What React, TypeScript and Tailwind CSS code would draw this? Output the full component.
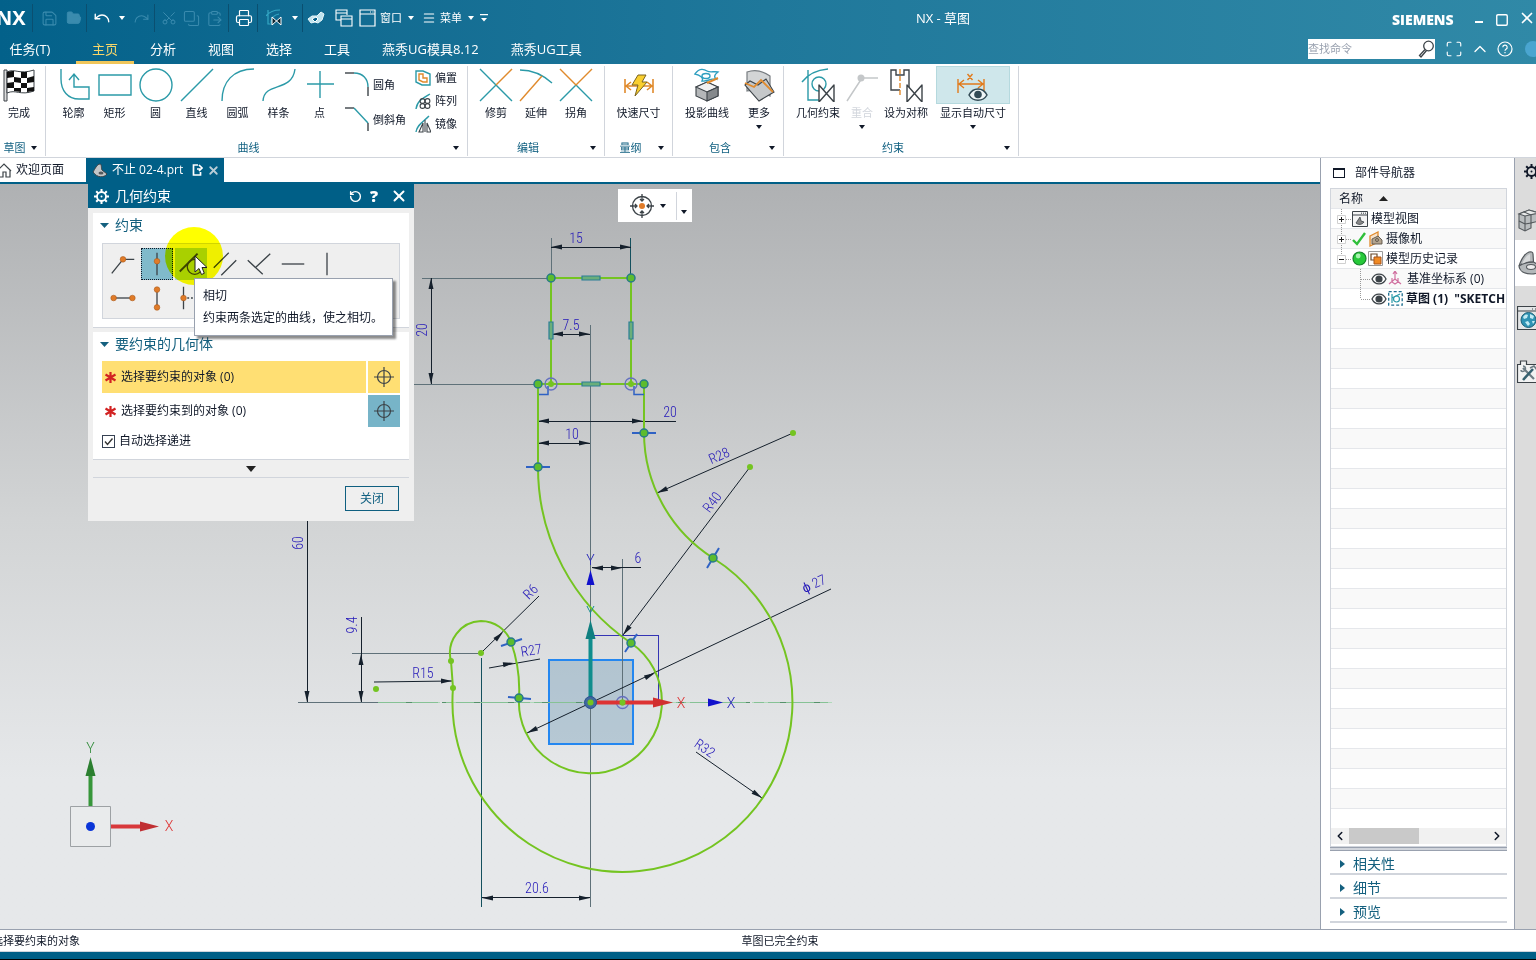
import type { ReactNode } from "react";
import {
    ChevronLeft, ChevronRight, ChevronUp, ClipboardPaste, Copy, FolderOpen, Maximize, Menu, Printer,
    Redo, RotateCcw, Save, Scissors, Square, Undo, X,
} from "lucide-react";

const TEAL = "#2b9aa8";
const ORANGE = "#e08a2c";
const INK = "#3c4348";

function Icon({ w = 34, h = 34, className = "", children }: { w?: number; h?: number; className?: string; children: ReactNode }) {
    return (
        <svg width={w} height={h} viewBox={`0 0 ${w} ${h}`} fill="none" stroke={TEAL} strokeWidth="1.4" className={`shrink-0 ${className}`} aria-hidden="true">
            {children}
        </svg>
    );
}

function Caret({ className = "" }: { className?: string }) {
    return (
        <svg width="6" height="4" viewBox="0 0 6 4" className={`shrink-0 ${className}`} aria-hidden="true">
            <path d="M0 0h6L3 4z" fill="currentColor" />
        </svg>
    );
}

function Gear() {
    return (
        <svg width="15" height="15" viewBox="0 0 15 15" fill="none" stroke="currentColor" className="shrink-0" aria-hidden="true">
            <circle cx="7.5" cy="7.5" r="4.5" strokeWidth="1.8" />
            <path d="M7.500 0v3M7.500 12v3M0 7.500h3M12 7.500h3M2.200 2.200l2 2M10.800 10.800l2 2M12.800 2.200l-2 2M4.200 10.800l-2 2" strokeWidth="2" />
            <circle cx="7.5" cy="7.5" r="1" fill="currentColor" stroke="none" />
        </svg>
    );
}

/* ---------- title bar ---------- */

const tabs = ["主页", "分析", "视图", "选择", "工具", "燕秀UG模具8.12", "燕秀UG工具"];

function Divider() {
    return <span className="h-7 w-px bg-[#0a4f70]" />;
}

function Header() {
    return (
        <header className="overflow-hidden bg-linear-to-r from-[#03618a] via-[#1f789b] to-[#3089a7] text-white">
            <div className="flex h-9 items-center">
                <div className="flex w-[494px] shrink-0 items-center">
                    <span className="-ml-1 w-9 shrink-0 text-[20px] leading-9 font-bold">NX</span>
                    <Divider />
                    <div className="flex w-[53px] items-center gap-2 pl-2 text-[#3a8bae]">
                        <button aria-label="保存"><Save size={17} strokeWidth={1.5} /></button>
                        <button aria-label="打开"><FolderOpen size={16} fill="currentColor" strokeWidth={1.5} /></button>
                    </div>
                    <Divider />
                    <div className="flex w-[67px] items-center gap-2 pl-1.5">
                        <button aria-label="撤销"><Undo size={18} strokeWidth={1.8} /></button>
                        <Caret />
                        <button aria-label="重做" className="text-[#3a8bae]"><Redo size={17} strokeWidth={1.5} /></button>
                    </div>
                    <Divider />
                    <div className="flex w-[73px] items-center gap-1.5 pl-1.5 text-[#3a8bae]">
                        <button aria-label="剪切"><Scissors size={16} strokeWidth={1.5} className="-rotate-90" /></button>
                        <button aria-label="复制"><Copy size={17} strokeWidth={1.5} className="-scale-100" /></button>
                        <button aria-label="粘贴"><ClipboardPaste size={17} strokeWidth={1.5} /></button>
                    </div>
                    <Divider />
                    <button aria-label="打印" className="w-7 pl-1.5"><Printer size={18} strokeWidth={1.6} /></button>
                    <Divider />
                    <button aria-label="几何约束" className="flex w-11 items-center gap-2 pl-2">
                        <Icon w={18} h={18}>
                            <path d="M2 1v14h6M0 7C3 3 8 1 14 1M5 14C5 8 8 6 13 5" stroke="#35a7c4" strokeWidth="1.2" />
                            <path d="M6 8v8l9-8v8z" fill="#0b2430" stroke="#fff" strokeWidth="1" />
                        </Icon>
                        <Caret />
                    </button>
                    <Divider />
                    <button aria-label="触控" className="ml-1">
                        <Icon w={18} h={18}>
                            <path d="M1 10l4-3h5l4-4 3 2-2 6-4 3-3-1-4 1z" fill="#bfe3ee" stroke="#e6f6fa" strokeWidth="1" />
                            <path d="M5 10l4-2 2 2-3 3z" fill="#03618a" stroke="#fff" strokeWidth="1" />
                        </Icon>
                    </button>
                    <button aria-label="切换窗口" className="ml-2.5">
                        <Icon w={18} h={18}>
                            <path d="M12 6V1H1v10h5M1 4h11M6 7h11v10H6zM6 10h11" stroke="#fff" strokeWidth="1.1" />
                        </Icon>
                    </button>
                    <button className="ml-1.5 flex items-center gap-1 text-[11px] leading-4">
                        <Icon w={17} h={18}>
                            <path d="M1 1h15v16H1zM1 5h15M11 3h1M13.500 3h1" stroke="#fff" strokeWidth="1.2" />
                        </Icon>
                        窗口
                        <Caret className="ml-0.5" />
                    </button>
                    <button className="ml-2 flex items-center gap-1 text-[11px] leading-4">
                        <Menu size={14} strokeWidth={1.8} />
                        菜单
                        <Caret className="ml-0.5" />
                    </button>
                    <button aria-label="工具条选项" className="ml-1.5">
                        <svg width="8" height="8" viewBox="0 0 8 8" aria-hidden="true"><path d="M0 0h8v1.300H0zM1 4h6L4 7.500z" fill="#fff" /></svg>
                    </button>
                </div>
                <h1 className="flex-1 text-center text-[13px] leading-5">NX - 草图</h1>
                <div className="flex w-36 shrink-0 items-center">
                    <span className="w-[88px] pt-1 text-[14px] leading-4 font-extrabold">SIEMENS</span>
                    <button aria-label="最小化" className="w-[22px] pt-2"><span className="block h-0.5 w-2 bg-white" /></button>
                    <button aria-label="最大化" className="w-6 pt-1">
                        <Square size={14} strokeWidth={2.4} />
                    </button>
                    <button aria-label="关闭窗口" className="shrink-0"><X size={18} strokeWidth={2.2} /></button>
                </div>
            </div>
            <div className="flex h-7 items-stretch text-[13px] leading-6">
                <button className="mr-4 w-15 shrink-0 border-b-3 border-transparent text-center">任务(T)</button>
                <nav className="flex flex-1">
                    {tabs.map((tab, i) => (
                        <button key={tab} className={i === 0 ? "border-b-3 border-[#f0c65a] px-4 text-[#f7d66b]" : "border-b-3 border-transparent px-4"}>
                            {tab}
                        </button>
                    ))}
                </nav>
                <div className="flex w-57 shrink-0 items-center">
                    <label className="mb-0.5 flex h-5 w-[127px] shrink-0 items-center bg-white text-gray-700">
                        <input aria-label="查找命令" placeholder="查找命令" className="min-w-0 flex-1 text-[11px] leading-4 text-gray-700 placeholder:text-gray-400" />
                        <Icon w={18} h={18}>
                            <circle cx="11.500" cy="6" r="4.800" stroke={INK} strokeWidth="1.300" />
                            <path d="M8 9.500l-5.500 6 1.500 1.500 5.500-6.500" stroke={INK} strokeWidth="1.300" />
                        </Icon>
                    </label>
                    <div className="mb-0.5 flex shrink-0 items-center gap-2 pl-2.5">
                        <button aria-label="全屏"><Maximize size={18} strokeWidth={1.5} /></button>
                        <button aria-label="折叠"><ChevronUp size={20} strokeWidth={1.6} className="-mx-px" /></button>
                        <button aria-label="帮助">
                            <svg width="16" height="16" viewBox="0 0 16 16" fill="none" stroke="#fff" strokeWidth="1.2" aria-hidden="true">
                                <circle cx="8" cy="8" r="7" />
                                <path d="M5.800 6.200a2.200 2.200 0 1 1 3.200 2c-.8.5-1 .8-1 1.600M8 11v1.300" />
                            </svg>
                        </button>
                        <span className="ml-1 size-4 rounded-full bg-[#4aa5d0]" />
                    </div>
                </div>
            </div>
        </header>
    );
}

/* ---------- ribbon ---------- */

const bowtie = <path d="M18 17v17L33 17v17z" fill="#fff" stroke={INK} strokeWidth="1.400" strokeLinejoin="round" />;

const curveTools: { label: string; icon: ReactNode }[] = [
    { label: "轮廓", icon: <path d="M4 1v10c0 12 7 20 18 20h10V19H17V7M12 12l5-6 5 6" /> },
    { label: "矩形", icon: <path d="M1 7h32v20H1z" /> },
    { label: "圆", icon: <circle cx="17" cy="17" r="16" /> },
    { label: "直线", icon: <path d="M1 33L33 1" /> },
    { label: "圆弧", icon: <path d="M1 33C1 14 12 1 33 1" /> },
    { label: "样条", icon: <path d="M1 33C2 13 30 25 33 1" /> },
    { label: "点", icon: <path d="M17 3v27M4 16h27" /> },
];

const editTools: { label: string; icon: ReactNode }[] = [
    { label: "修剪", icon: <><path d="M1 1l32 32M1 33l16-16" /><path d="M17 17L33 1" stroke={ORANGE} /></> },
    { label: "延伸", icon: <><path d="M1 2c12 0 22 4 32 13" /><path d="M23 8L1 33" stroke={ORANGE} /></> },
    { label: "拐角", icon: <><path d="M1 33l16-16 16 16" /><path d="M1 1l16 16L33 1" stroke={ORANGE} /></> },
];

function Tool({ label, icon, width = "w-10", menu, disabled, active }: { label: string; icon: ReactNode; width?: string; menu?: boolean; disabled?: boolean; active?: boolean }) {
    return (
        <button disabled={disabled} className={`flex shrink-0 flex-col items-center text-[11px] leading-4 whitespace-nowrap ${width} ${disabled ? "text-gray-300" : "text-gray-900"}`}>
            <span className={`mb-px flex h-[38px] w-full items-center justify-center ${active ? "border border-[#b5d9de] bg-[#cfe7eb]" : ""}`}>
                <Icon>{icon}</Icon>
            </span>
            {label}
            {menu && <Caret className="mt-1 text-gray-900" />}
        </button>
    );
}

function Group({ title, className = "", children }: { title: string; className?: string; children: ReactNode }) {
    return (
        <section className="mt-0.5 mb-px flex shrink-0 flex-col border-r border-gray-300">
            <div className={`flex flex-1 ${className}`}>{children}</div>
            <div className="flex h-4 items-center text-[11px] leading-4 text-[#0f5f80]">
                <span className="flex-1 text-center">{title}</span>
                <button aria-label={`${title}选项`} className="w-4 pl-0.5 text-gray-900"><Caret /></button>
            </div>
        </section>
    );
}

function SmallTool({ label, icon }: { label: string; icon: ReactNode }) {
    return (
        <button className="flex h-[23px] items-center gap-1 text-[11px] leading-4 whitespace-nowrap text-gray-900">
            <Icon w={16} h={18}>{icon}</Icon>
            {label}
        </button>
    );
}

function Ribbon() {
    return (
        <div className="flex h-[94px] shrink-0 overflow-hidden border-b border-gray-300 bg-white">
            <Group title="草图" className="w-[45px]">
                <Tool
                    label="完成"
                    width="w-[38px]"
                    icon={
                        <>
                            <path d="M2 2h3v31H2z" fill="#ddd" stroke={INK} strokeWidth="1" />
                            <path d="M5 4c8-4 12 3 27-2v21c-14 5-18-2-27 2z" fill="#fff" stroke={INK} strokeWidth="1" />
                            <path d="M5 4c3-1 5-1 7-1v6l-7 1zM19 4l6 0v6l-6 0zM12 9l7 1v5l-7-1zM25 10l7-2v6l-7 1zM5 15l7-1v6l-7 0zM19 15l6 0v5l-6 0zM12 20l7 0v4l-7-1zM25 20l7-1v4l-7 1z" fill="#111" stroke="none" />
                        </>
                    }
                />
            </Group>
            <Group title="曲线" className="pr-2.5 pl-[7px]">
                {curveTools.map((tool) => <Tool key={tool.label} width="w-[41px]" {...tool} />)}
                <div className="flex w-[71px] flex-col gap-2.5 pt-1.5 pl-1 text-[11px] leading-4 whitespace-nowrap">
                    <button className="flex items-center gap-1">
                        <Icon w={25} h={25}><path d="M1 1h9" stroke={INK} /><path d="M10 1c9 0 14 6 14 14" /><path d="M24 15v9" stroke={INK} /></Icon>
                        圆角
                    </button>
                    <button className="flex items-center gap-1">
                        <Icon w={25} h={25}><path d="M1 1h9" stroke={INK} /><path d="M10 1l14 15" /><path d="M24 16v8" stroke={INK} /></Icon>
                        倒斜角
                    </button>
                </div>
                <div className="flex flex-col pl-1">
                    <SmallTool label="偏置" icon={<><path d="M1 2h7l7 3v11H7L1 13z" /><path d="M4 5h4v4h4v4H8L4 11z" stroke={ORANGE} /></>} />
                    <SmallTool
                        label="阵列"
                        icon={
                            <>
                                <path d="M1 17C2 9 8 6 15 2" />
                                <g stroke={INK} strokeWidth="1.100">
                                    <circle cx="7.500" cy="9" r="2.400" /><circle cx="12.500" cy="9" r="2.400" /><circle cx="7.500" cy="14" r="2.400" /><circle cx="12.500" cy="14" r="2.400" />
                                </g>
                            </>
                        }
                    />
                    <SmallTool label="镜像" icon={<><path d="M1 17C2 10 8 7 14 1" /><path d="M10 5v12M8 8v9H4zM12 8v9h4z" stroke={INK} strokeWidth="1.100" /></>} />
                </div>
            </Group>
            <Group title="编辑" className="px-2">
                {editTools.map((tool) => <Tool key={tool.label} {...tool} />)}
            </Group>
            <Group title="量纲" className="w-[67px] justify-center">
                <Tool
                    label="快速尺寸"
                    width="w-12"
                    icon={
                        <>
                            <path d="M3 11v14M31 11v14M4 18h26M9 14l-5 4 5 4M25 14l5 4-5 4" stroke={ORANGE} strokeWidth="1.600" />
                            <path d="M16 7h8l-4 7h5L13 28l3-11H10z" fill="#f9cf2f" stroke="#7b6420" strokeWidth="1" />
                        </>
                    }
                />
            </Group>
            <Group title="包含" className="w-[110px] gap-3 pl-2.5">
                <Tool
                    label="投影曲线"
                    width="w-12"
                    icon={
                        <>
                            <path d="M6 19l11-5 11 5v9l-11 5-11-5z" fill="#b4b7b9" stroke={INK} strokeWidth="1.100" />
                            <path d="M6 19l11-5 11 5-11 5z" fill="#f1f1f1" stroke={INK} strokeWidth="1.100" />
                            <path d="M17 24l11-5v9l-11 5z" fill="#85898c" stroke={INK} strokeWidth="1.100" />
                            <path d="M5 6c4-6 9-5 12-3s7 0 11 1c-4 3-4 5-2 7-5-1-9 3-14 2 2-3-2-6-7-7z" stroke="#2e9fc0" />
                            <ellipse cx="16" cy="8" rx="4" ry="2.500" stroke="#2e9fc0" />
                            <path d="M17 15l11-5" stroke={ORANGE} strokeWidth="2" />
                        </>
                    }
                />
                <Tool
                    label="更多"
                    width="w-8"
                    menu
                    icon={
                        <>
                            <path d="M5 4c8-3 16-1 23 4v20c-7-4-15-7-23-5z" fill="#d3d5d6" stroke="#777c80" strokeWidth="1.200" />
                            <path d="M3 17l5-4 8 4 8-6 8 13-15 9z" fill="#c5c8ca" stroke={INK} strokeWidth="1.100" />
                            <path d="M3 15l9 4 7-7 12 12" stroke={ORANGE} strokeWidth="1.800" />
                        </>
                    }
                />
            </Group>
            <Group title="约束" className="pr-2 pl-2.5">
                <Tool label="几何约束" width="w-12" icon={<><path d="M7 2v30h12M1 14C7 6 15 2 27 1" /><circle cx="18" cy="16" r="7" />{bowtie}</>} />
                <Tool label="重合" menu disabled icon={<><path d="M2 33L17 10h16" stroke="#c4c7c9" strokeWidth="1.500" /><circle cx="16" cy="10" r="3.500" fill="#c4c7c9" stroke="none" /></>} />
                <Tool label="设为对称" width="w-12" icon={<><path d="M20 22V2h-5v5H7V2H2v20h9" stroke={INK} /><path d="M11 1v28" stroke={ORANGE} strokeDasharray="5 2" />{bowtie}</>} />
                <Tool
                    label="显示自动尺寸"
                    width="ml-1.5 w-[74px]"
                    menu
                    active
                    icon={
                        <>
                            <path d="M2 11v14M28 11v12M3 16h24M8 12l-5 4 5 4M22 12l5 4-5 4M11.500 6l5 6M16.500 6l-5 6" stroke="#e17b1c" strokeWidth="1.400" />
                            <path d="M13 27c4-8 14-8 18 0-4 7-14 7-18 0z" fill="#eef5f6" stroke="#334b56" strokeWidth="1.500" />
                            <circle cx="22" cy="26.500" r="3.800" fill="#334b56" stroke="none" />
                        </>
                    }
                />
            </Group>
        </div>
    );
}

/* ---------- sketch ---------- */

function Head({ x, y, a }: { x: number; y: number; a: number }) {
    return <path d="M0 0L-11-2.500V2.500z" fill="#15202c" transform={`translate(${x} ${y}) rotate(${a})`} />;
}

function Dim({ x, y, a = 0, children }: { x: number; y: number; a?: number; children: string }) {
    return (
        <text textAnchor="middle" fontSize="14" fill="#2216b8" transform={`translate(${x} ${y}) rotate(${a})`} className="font-['Roboto_Condensed','Roboto',sans-serif] font-light">
            {children}
        </text>
    );
}

// each arrow head: tip position and pointing angle
const heads = [
    [551, 247, 180], [631, 247, 0], [431, 278, -90], [431, 384, 90], [552, 334, 180], [590, 334, 0],
    [538, 421, 180], [643, 421, 0], [538, 443, 180], [590, 443, 0], [657, 493, 156], [623, 635, 127],
    [592, 568, 180], [622, 568, 0], [527, 733, 155], [655, 673, -25], [762, 798, 35], [307, 702, 90],
    [361, 654, -90], [361, 702, 90], [452, 681, 0], [503, 632, -45], [514, 663, -9], [482, 898, 180], [590, 898, 0],
];

const nodes = [
    [551, 278], [631, 278], [538, 384], [644, 384], [644, 433], [538, 467], [713, 558], [631, 643], [511, 642], [519, 698],
];

function Sketch() {
    return (
        <svg viewBox="0 184 1320 745" preserveAspectRatio="xMinYMin meet" className="h-full w-full" role="img" aria-label="草图">
            <rect x="549" y="660" width="84" height="84" fill="#7fa3bd" fillOpacity="0.45" stroke="#2487f0" strokeWidth="2" />

            {/* extension lines */}
            <g stroke="#5f7179" strokeWidth="1" fill="none" shapeRendering="crispEdges">
                <path d="M551.500 238v38M422 278.500h129M414 384.500h124M590.500 325v582M298 702.500h80M352 653.500h126M622.500 559v143" />
                <path d="M481.500 658v249M630.500 238v38" stroke="#14505e" />
                <path d="M378 702.500h454" stroke="#55916a" strokeDasharray="60 4 10 4" />
                <path d="M378 702.500h454" stroke="#9bd7a8" strokeOpacity="0.7" strokeDasharray="28 6" />
                <path d="M594 635.500h64v66" stroke="#3434b4" />
            </g>

            {/* dimension lines */}
            <g stroke="#15202c" strokeWidth="1" fill="none">
                <path shapeRendering="crispEdges" d="M551 247.500h80M431.500 278v106M551 334.500h39M538 421.500h138M538 443.500h52M592 567.500h49M307.500 500v202M361.500 617v85M482 897.500h108" />
                <path d="M793 433L657 493M750 467L623 635M831 589L527 733M696 752l66 46M374 682l78-1M481 653l58-57M489 668l51-9" />
            </g>
            {heads.map(([x, y, a]) => <Head key={`${x}-${y}`} x={x} y={y} a={a} />)}

            {/* hook outline */}
            <g stroke="#74c421" strokeWidth="2" fill="none">
                <path d="M551 278h80v106h-80z" />
                <path d="M551 384h-13v83A212 212 0 0 0 631 643A71.500 71.500 0 1 1 519 698A143 143 0 0 0 511 642A32 32 0 0 0 481 621A32 32 0 0 0 451 661L453 688A170 170 0 1 0 713 558A149 149 0 0 1 644 433V384h-13" />
            </g>

            {/* constraint marks */}
            <g stroke="#2f62c4" strokeWidth="2" fill="none">
                <path d="M632 433h24M526 467h24M707 568l12-20M625 652l12-18M501 646l21-7M508 697l23 2" />
                <path d="M539 394.500h9V386M634 386v8.500h10" strokeWidth="1.500" />
            </g>
            <g fill="#6aae7a" stroke="#2b7f96" strokeWidth="1.200">
                <path d="M582 276h18v4h-18zM582 382h18v4h-18zM549 322h4v17h-4zM629 322h4v17h-4z" />
            </g>
            {nodes.map(([x, y]) => <circle key={`${x}-${y}`} cx={x} cy={y} r="4" fill="#5cbc2e" stroke="#277a8a" strokeWidth="1.500" />)}
            {[[551, 384], [631, 384], [622.5, 702.5]].map(([x, y]) => (
                <g key={`${x}-${y}`}>
                    <circle cx={x} cy={y} r="6" fill="none" stroke="#6571c0" strokeWidth="1.300" />
                    <circle cx={x} cy={y} r="3" fill="#74c421" />
                </g>
            ))}
            {[[793, 433], [750, 467], [481, 653], [451, 661], [453, 688], [376, 689]].map(([x, y]) => (
                <circle key={`${x}-${y}`} cx={x} cy={y} r="3" fill="#74c421" />
            ))}

            {/* datum axes */}
            <path d="M590.500 702V638" stroke="#0f8d8d" strokeWidth="4" />
            <path d="M590.500 620l-5 19h10z" fill="#0f7f80" />
            <path d="M594 702.500h62" stroke="#d33" strokeWidth="4" />
            <path d="M673 702.500l-20-5v10z" fill="#d12f2f" />
            <path d="M590.500 570l-4 15h8zM723 702.500l-15-4v8z" fill="#1111cc" />
            <circle cx="590.5" cy="702.5" r="6" fill="#41699e" stroke="#2a4f90" />
            <circle cx="590.5" cy="702.5" r="3" fill="#74c421" />
            <circle cx="622.5" cy="702.5" r="3" fill="#74c421" />
            <g textAnchor="middle" fontSize="14" className="font-['Roboto',sans-serif] font-light">
                <text x="590.5" y="565" fill="#2222b8">Y</text>
                <text x="590.5" y="617" fill="#0f8d8d">Y</text>
                <text x="681" y="708" fill="#d33">X</text>
                <text x="731" y="708" fill="#2222b8">X</text>
                <text x="90.5" y="753" fill="#2d8a36">Y</text>
                <text x="169" y="831" fill="#d33">X</text>
            </g>

            <Dim x={576} y={243}>15</Dim>
            <Dim x={427} y={330} a={-90}>20</Dim>
            <Dim x={571} y={330}>7.5</Dim>
            <Dim x={670} y={417}>20</Dim>
            <Dim x={572} y={439}>10</Dim>
            <Dim x={721} y={460} a={-24}>R28</Dim>
            <Dim x={716} y={505} a={-53}>R40</Dim>
            <Dim x={638} y={563}>6</Dim>
            <Dim x={816} y={588} a={-25}>ϕ 27</Dim>
            <Dim x={702} y={752} a={35}>R32</Dim>
            <Dim x={303} y={543} a={-90}>60</Dim>
            <Dim x={357} y={625} a={-90}>9.4</Dim>
            <Dim x={423} y={678}>R15</Dim>
            <Dim x={534} y={595} a={-45}>R6</Dim>
            <Dim x={532} y={655} a={-9}>R27</Dim>
            <Dim x={537} y={893}>20.6</Dim>

            {/* view triad */}
            <path d="M70.500 806.500h40v40h-40z" fill="#e9ebec" stroke="#9da1a4" />
            <path d="M90.500 806V775" stroke="#37963a" strokeWidth="4" />
            <path d="M90.500 757l-5 19h10z" fill="#2b7f30" />
            <path d="M111 826.500h30" stroke="#d8383b" strokeWidth="4" />
            <path d="M159 826.500l-19-5v10z" fill="#c02f33" />
            <circle cx="90.5" cy="826.5" r="4.5" fill="#0a35d8" />
        </svg>
    );
}

/* ---------- constraint dialog ---------- */

const dot = (x: number, y: number) => <circle cx={x} cy={y} r="3" fill="#e07b28" stroke="#a85a1c" strokeWidth="0.6" />;

const constraints: { label: string; icon: ReactNode }[] = [
    { label: "重合", icon: <><path d="M4 26L16 11h12" />{dot(16, 11)}</> },
    { label: "点在曲线上", icon: <><path d="M16 4v24" />{dot(16, 13)}</> },
    { label: "相切", icon: <><path d="M4 24L23 5" strokeWidth="2" /><circle cx="20" cy="19" r="8" /></> },
    { label: "平行", icon: <path d="M4 20L20 4M12 28l16-16" /> },
    { label: "垂直", icon: <path d="M4 12l16 15M12 20L28 5" /> },
    { label: "水平", icon: <path d="M4 16h24" /> },
    { label: "竖直", icon: <path d="M16 4v24" /> },
    { label: "水平对齐", icon: <><path d="M6 16h20" />{dot(6, 16)}{dot(26, 16)}</> },
    { label: "竖直对齐", icon: <><path d="M16 7v18" />{dot(16, 7)}{dot(16, 26)}</> },
    { label: "中点", icon: <><path d="M8 4v24" /><path d="M12 16h14" strokeDasharray="2 2" />{dot(8, 16)}</> },
];

function SectionTitle({ children }: { children: string }) {
    return (
        <h2 className="flex items-center gap-1.5 text-[14px] leading-6 text-[#14607f]">
            <svg width="9" height="5" viewBox="0 0 9 5" aria-hidden="true"><path d="M0 0h9L4.500 5z" fill="#14607f" /></svg>
            {children}
        </h2>
    );
}

function PickRow({ label, active }: { label: string; active?: boolean }) {
    return (
        <div className="mb-0.5 flex h-8 gap-0.5">
            <button className={`flex flex-1 items-center gap-1 pl-0.5 text-[12px] leading-5 text-gray-900 ${active ? "bg-[#ffdf73]" : ""}`}>
                <svg width="13" height="13" viewBox="0 0 13 13" stroke="#d22222" strokeWidth="2.2" aria-hidden="true"><path d="M6.500 1v11M1.500 3.500l10 6M1.500 9.500l10-6" /></svg>
                {label}
            </button>
            <button aria-label={`${label} 点`} className={`flex size-8 items-center justify-center ${active ? "bg-[#ffdf73]" : "bg-[#77b4c8]"}`}>
                <svg width="22" height="22" viewBox="0 0 22 22" fill="none" stroke={INK} strokeWidth="1.2" aria-hidden="true">
                    <circle cx="11" cy="11" r="6.5" /><path d="M11 1v20M1 11h20" />
                </svg>
            </button>
        </div>
    );
}

function ConstraintDialog() {
    return (
        <div role="dialog" aria-label="几何约束" className="absolute top-0 left-[88px] w-[326px] bg-[#efefef]">
            <div className="flex h-6 items-center bg-[#005f87] px-1.5 text-[14px] leading-6 text-white">
                <Gear />
                <span className="flex-1 pl-1.5">几何约束</span>
                <button aria-label="重置"><RotateCcw size={13} strokeWidth={2.6} /></button>
                <button aria-label="帮助" className="w-6 text-[16px] font-extrabold">?</button>
                <button aria-label="关闭" className="ml-1"><X size={18} strokeWidth={2.6} /></button>
            </div>
            <div className="mx-[5px] mt-[5px] border-b border-gray-300 bg-white px-[9px] pb-2">
                <div className="-ml-0.5"><SectionTitle>约束</SectionTitle></div>
                <div className="mt-1.5 grid grid-cols-[repeat(7,32px)] gap-0.5 border border-gray-300 bg-[#efefef] p-1">
                    {constraints.map(({ label, icon }, i) => (
                        <button
                            key={label}
                            aria-label={label}
                            className={`size-8 border ${i === 1 ? "border-dotted border-gray-900 bg-[#80bacb]" : i === 2 ? "border-[#a9d0dc] bg-[#a9d0dc]" : "border-transparent"}`}
                        >
                            <svg width="30" height="30" viewBox="0 0 32 32" fill="none" stroke={INK} strokeWidth="1.4" aria-hidden="true">{icon}</svg>
                        </button>
                    ))}
                </div>
            </div>
            <div className="mx-[5px] mt-1 border-b border-gray-300 bg-white px-[9px] pb-1.5">
                <div className="-ml-0.5 pb-[5px]"><SectionTitle>要约束的几何体</SectionTitle></div>
                <PickRow label="选择要约束的对象 (0)" active />
                <PickRow label="选择要约束到的对象 (0)" />
                <label className="flex h-6 items-center gap-1 text-[12px] leading-5 text-gray-900">
                    <span className="grid">
                        <input type="checkbox" defaultChecked className="peer col-start-1 row-start-1 size-[13px] appearance-none border border-gray-700 bg-white" />
                        <svg width="13" height="13" viewBox="0 0 13 13" fill="none" stroke="#333" strokeWidth="1.4" className="pointer-events-none invisible col-start-1 row-start-1 peer-checked:visible" aria-hidden="true">
                            <path d="M3 6.500L5.500 9.500 10.500 3.500" />
                        </svg>
                    </span>
                    自动选择递进
                </label>
            </div>
            <button aria-label="更多选项" className="mx-[5px] flex h-[18px] w-[316px] items-center justify-center border-b border-gray-300">
                <svg width="10" height="6" viewBox="0 0 10 6" aria-hidden="true"><path d="M0 0h10L5 6z" fill="#222" /></svg>
            </button>
            <div className="flex justify-end px-[15px] pt-2 pb-2.5">
                <button className="h-[25px] w-[54px] border border-[#0f5f80] text-[12px] leading-5 text-[#0f5f80]">关闭</button>
            </div>

            {/* click highlight, tooltip and pointer */}
            <span className="pointer-events-none absolute top-[43px] left-[77px] size-[58px] rounded-full bg-[#ffff00] mix-blend-multiply" />
            <div role="tooltip" className="absolute top-[94px] left-[106px] w-[199px] border border-gray-400 bg-white px-2 py-1.5 text-[12px] leading-[22px] text-gray-900 shadow-[3px_3px_2px_rgba(0,0,0,0.45)]">
                <p>相切</p>
                <p className="whitespace-nowrap">约束两条选定的曲线，使之相切。</p>
            </div>
            <svg width="14" height="21" viewBox="0 0 14 21" className="absolute top-[71px] left-[106px]" aria-hidden="true">
                <path d="M1 1v16l4-3.500 2.500 6 2.800-1.200L8 12.500h5z" fill="#fff" stroke="#222" strokeWidth="1" />
            </svg>
        </div>
    );
}

/* ---------- part navigator ---------- */

function Eye() {
    return (
        <Icon w={16} h={14}>
            <path d="M1 7c3-6.500 11-6.500 14 0-3 6.500-11 6.500-14 0z" stroke={INK} fill="#fff" strokeWidth="1.300" />
            <circle cx="8" cy="7" r="3.600" fill={INK} stroke="none" />
        </Icon>
    );
}

function Expander({ open }: { open?: boolean }) {
    return (
        <button aria-label={open ? "折叠" : "展开"} className="shrink-0">
            <svg width="14" height="20" viewBox="0 0 14 20" fill="none" aria-hidden="true">
                <path d={open ? "M4.500 0v6M9 10.500h5" : "M4.500 0v20M9 10.500h5"} stroke="#999" strokeDasharray="1 1" />
                <path d="M.5 6.500h8v8h-8z" fill="#fff" stroke="#d0d0d0" />
                <path d={open ? "M2 10.500h5" : "M2 10.500h5M4.500 8v5"} stroke="#222" />
            </svg>
        </button>
    );
}

function Branch({ last }: { last?: boolean }) {
    return (
        <svg width="33" height="20" viewBox="0 0 33 20" fill="none" className="shrink-0" aria-hidden="true">
            <path d={last ? "M23.500 0v10M24 10.500h9" : "M23.500 0v20M24 10.500h9"} stroke="#999" strokeDasharray="1 1" />
        </svg>
    );
}

const treeRows: { label: string; bold?: boolean; lead: ReactNode }[] = [
    {
        label: "模型视图",
        lead: <><Expander /><Icon w={16} h={16}><path d="M.5.500h15v15H.5zM.5 4h15M9 2.200h1M11 2.200h1M13 2.200h1" stroke={INK} fill="#f4f4f4" strokeWidth="1" /><path d="M4 12l4-6 1 4 3 1c-2 3-6 3-8 1z" fill="#888" stroke={INK} strokeWidth="0.800" /></Icon></>,
    },
    {
        label: "摄像机",
        lead: (
            <>
                <Expander />
                <Icon w={15} h={14}><path d="M1 8l4 4 8-11" stroke="#2fbf3a" strokeWidth="2.400" /></Icon>
                <Icon w={15} h={16}><path d="M2 5l8-4v10l-8 4z" stroke={ORANGE} fill="#f7e3cc" strokeWidth="1.300" /><path d="M4 8l6-3 4 4v4H9l-5 0z" fill="#b3a48f" stroke="#5b5348" strokeWidth="0.900" /><circle cx="9" cy="9" r="1.500" stroke="#5b5348" strokeWidth="0.900" /></Icon>
            </>
        ),
    },
    {
        label: "模型历史记录",
        lead: (
            <>
                <Expander open />
                <Icon w={15} h={15}><circle cx="7.500" cy="7.500" r="6.500" fill="#27c93a" stroke="#14802a" strokeWidth="1.200" /><circle cx="6.200" cy="5" r="2.400" fill="#a6f2ae" stroke="none" /></Icon>
                <Icon w={15} h={15}><path d="M.5.500h14v14H.5z" stroke="#9a9a9a" strokeWidth="1" /><path d="M3 3h6v6H3z" stroke="#6b4a2c" strokeWidth="1.200" /><path d="M6 6h7v7H6z" fill="#f08a24" stroke="#a8551a" strokeWidth="1" /></Icon>
            </>
        ),
    },
    {
        label: "基准坐标系 (0)",
        lead: <><Branch /><Eye /><Icon w={14} h={15} className="mr-0.5"><path d="M7 1v7L1 13M7 8l6 5M4 7v4l3 2 3-2V7M5 3l2-3 2 3" stroke="#d070a0" strokeWidth="1.200" /></Icon></>,
    },
    {
        label: '草图 (1)  "SKETCH',
        bold: true,
        lead: <><Branch last /><Eye /><Icon w={15} h={15}><path d="M.7.700h13.500v13.500H.7z" stroke="#1f6f90" strokeDasharray="3 2" strokeWidth="1.300" /><path d="M4 3v9M4 7l8-4" strokeWidth="1.200" /><circle cx="8.500" cy="8" r="3" strokeWidth="1.200" /></Icon></>,
    },
];

const blankRows = Array.from({ length: 26 }, (_, i) => i);

function Navigator() {
    return (
        <aside className="flex w-[194px] shrink-0 flex-col border-l border-gray-400 bg-white pr-[7px] pb-1.5 pl-[9px]">
            <h2 className="flex h-[30px] shrink-0 items-center gap-2.5 pl-[3px] text-[12px] leading-5">
                <span className="h-2.5 w-3 border border-t-2 border-gray-900" />
                部件导航器
            </h2>
            <div className="flex min-h-0 flex-1 flex-col border border-gray-300 pb-0.5">
                <div className="flex h-5 shrink-0 items-center gap-4 border-b border-gray-200 bg-[#f1f1f1] pl-2 text-[12px] leading-5">
                    名称
                    <svg width="9" height="5" viewBox="0 0 9 5" aria-hidden="true"><path d="M0 5h9L4.500 0z" fill="#222" /></svg>
                </div>
                <ul className="min-h-0 flex-1 overflow-hidden text-[12px] leading-5">
                    {treeRows.map(({ label, bold, lead }) => (
                        <li key={label} className="flex h-5 items-center gap-px border-b border-gray-200 pl-1.5 whitespace-pre even:bg-[#f9f9f9]">
                            {lead}
                            <span className={bold ? "pl-0.5 font-bold" : "pl-0.5"}>{label}</span>
                        </li>
                    ))}
                    {blankRows.map((row) => <li key={row} className="h-5 border-b border-gray-200 even:bg-[#f9f9f9]" />)}
                </ul>
                <div className="flex h-4 shrink-0 items-center justify-between bg-[#f1f1f1] px-0.5">
                    <button aria-label="向左滚动"><ChevronLeft size={14} strokeWidth={2.6} /></button>
                    <span className="mr-auto ml-0.5 h-4 w-[70px] bg-[#c9c9c9]" />
                    <button aria-label="向右滚动"><ChevronRight size={14} strokeWidth={2.6} /></button>
                </div>
            </div>
            <div className="h-1 shrink-0 border-y border-gray-400 bg-gray-300" />
            {["相关性", "细节", "预览"].map((name) => (
                <button key={name} className="flex h-6 shrink-0 items-center gap-2 border-b-2 border-gray-300 pt-1 pl-2.5 text-[14px] leading-5 text-[#14607f]">
                    <svg width="5" height="8" viewBox="0 0 5 8" aria-hidden="true"><path d="M0 0v8l5-4z" fill="#14607f" /></svg>
                    {name}
                </button>
            ))}
        </aside>
    );
}

function Rail() {
    return (
        <div className="flex w-[22px] shrink-0 flex-col overflow-hidden border-l border-gray-400 bg-[#dcdcdc] pl-0.5">
            <button aria-label="设置" className="h-[26px] shrink-0 pl-[7px]"><Gear /></button>
            <button aria-label="装配导航器" className="flex h-14 shrink-0 items-center pt-4">
                <Icon w={24} h={24}>
                    <g stroke="#54595d" strokeWidth="1.100">
                        <path d="M2 6l10-4 10 3v8l-8 2v5l-6 3-6-3z" fill="#b9bdbf" />
                        <path d="M2 6l6 2 14-3-10-3z" fill="#e8eaea" />
                        <path d="M8 8v15M14 7v8l-6 1M2 13l6 3M7 4l7 3" />
                    </g>
                </Icon>
            </button>
            <button aria-label="部件导航器" className="-ml-0.5 flex h-[46px] shrink-0 items-center bg-white pl-0.5">
                <Icon w={26} h={24}>
                    <path d="M2 15C4 9 7 3 12 1c2-.5 4 0 4 2l.5 8 8 5c1 3-4 7-10 7-7 0-12-3-12.500-8z" fill="#b4b8ba" stroke="#54595d" strokeWidth="1.200" />
                    <path d="M2 15c4-3 9-4 14.500-4" stroke="#54595d" />
                    <path d="M5 13C7 8 10 4 13 3v7c-3 .5-5 1.500-8 3z" fill="#d8dadb" stroke="none" />
                    <ellipse cx="14" cy="16" rx="4.500" ry="2.500" fill="#eee" stroke="#54595d" strokeWidth="1.100" />
                </Icon>
            </button>
            <button aria-label="网页浏览器" className="flex h-16 shrink-0 items-center">
                <Icon w={24} h={24}>
                    <path d="M.5.500h23v23H.5zM.5 5h23M15 3h1M18 3h1" stroke={INK} fill="#e4e6e7" strokeWidth="1.200" />
                    <circle cx="11.500" cy="14" r="7.500" fill="#2f93b4" stroke="#1d6077" strokeWidth="1" />
                    <path d="M6 11c2-3 4-3 5-2l-1 3-3 1zM13 8l4 2-1 3-3-1zM8 16l3-1 2 3-2 2zM15 15l3 0-2 3z" fill="#c2ebf3" stroke="none" />
                </Icon>
            </button>
            <button aria-label="角色" className="flex h-11 shrink-0 items-center">
                <Icon w={24} h={24}>
                    <path d="M.5 22.500V4.500h3V1h6v3.500h14v18z" stroke={INK} fill="#f1f2f2" strokeWidth="1.200" />
                    <path d="M6 8l11 11" stroke="#6c7b83" strokeWidth="2.200" />
                    <path d="M16 9L6 20" stroke="#35606f" strokeWidth="2.600" />
                    <path d="M4 10c0 2 3 2 4 0s0-4-2-4M13 8l4-2 3 4" stroke="#6c7b83" strokeWidth="1.600" />
                </Icon>
            </button>
        </div>
    );
}

/* ---------- page ---------- */

export default function App() {
    return (
        <div className="flex h-screen flex-col overflow-hidden bg-white font-['Open_Sans','Noto_Sans_CJK_SC',sans-serif] text-gray-900">
            <Header />
            <Ribbon />
            <div className="flex min-h-0 flex-1">
                <main className="flex min-w-0 flex-1 flex-col">
                    <div className="flex h-[26px] shrink-0 border-b-2 border-[#005f87] text-[12px] leading-6">
                        <button className="-ml-1 flex w-[90px] items-center gap-1">
                            <Icon w={16} h={16}><path d="M1 9l7-7 7 7M3 8v7h4v-5h3v5h4V8" stroke={INK} strokeWidth="1.200" /></Icon>
                            欢迎页面
                        </button>
                        <div className="flex h-6 w-[138px] items-center gap-1 bg-[#005f87] pl-1.5 whitespace-nowrap text-white">
                            <Icon w={16} h={14}><path d="M1 9c2-3 4-8 7-8 2 0 1 5 2 6l5 4c-3 4-10 4-14-2z" fill="#c3c6c8" stroke="#3c4348" strokeWidth="1" /><ellipse cx="9" cy="10" rx="2.500" ry="1.500" fill="#54595d" stroke="none" /></Icon>
                            <span className="flex-1">不止 02-4.prt</span>
                            <Icon w={11} h={12}><path d="M6 1H1.500v10h7V8M5 5h4M7 1l3 3-3 3" stroke="#fff" strokeWidth="1.700" /></Icon>
                            <button aria-label="关闭标签" className="mr-1"><X size={13} strokeWidth={3.4} className="text-[#b8cdd6]" /></button>
                        </div>
                    </div>
                    <div className="relative min-h-0 flex-1 bg-linear-to-b from-[#afb1b3] via-[#d2d4d5] via-45% to-[#e6e8ea] to-80%">
                        <Sketch />
                        <div className="absolute top-[5px] left-[618px] flex h-[33px] w-[74px] items-center bg-white pl-3">
                            <button aria-label="捕捉点" className="flex items-center gap-1.5">
                                <svg width="24" height="24" viewBox="0 0 24 24" fill="none" stroke={INK} strokeWidth="1.300" aria-hidden="true">
                                    <circle cx="12" cy="12" r="9.500" />
                                    <path d="M12 0v7M12 24v-7M0 12h7M24 12h-7M10 5l2 2 2-2M10 19l2-2 2 2M5 10l2 2-2 2M19 10l-2 2 2 2" />
                                    <circle cx="12" cy="12" r="3" fill="#e07b28" stroke="none" />
                                </svg>
                                <Caret />
                            </button>
                            <span className="mx-2.5 h-7 w-px bg-gray-300" />
                            <button aria-label="更多选项" className="-ml-1.5 mt-3"><Caret /></button>
                        </div>
                        <ConstraintDialog />
                    </div>
                </main>
                <Navigator />
                <Rail />
            </div>
            <footer className="shrink-0">
                <div className="grid grid-cols-[1fr_auto_1fr] border-t border-gray-400 text-[11px] leading-[21px]">
                    <span className="-ml-2">选择要约束的对象</span>
                    <span className="pl-6">草图已完全约束</span>
                </div>
                <div className="h-2 border-t border-gray-300 bg-[#005f87]" />
                <div className="h-px bg-black" />
            </footer>
        </div>
    );
}
